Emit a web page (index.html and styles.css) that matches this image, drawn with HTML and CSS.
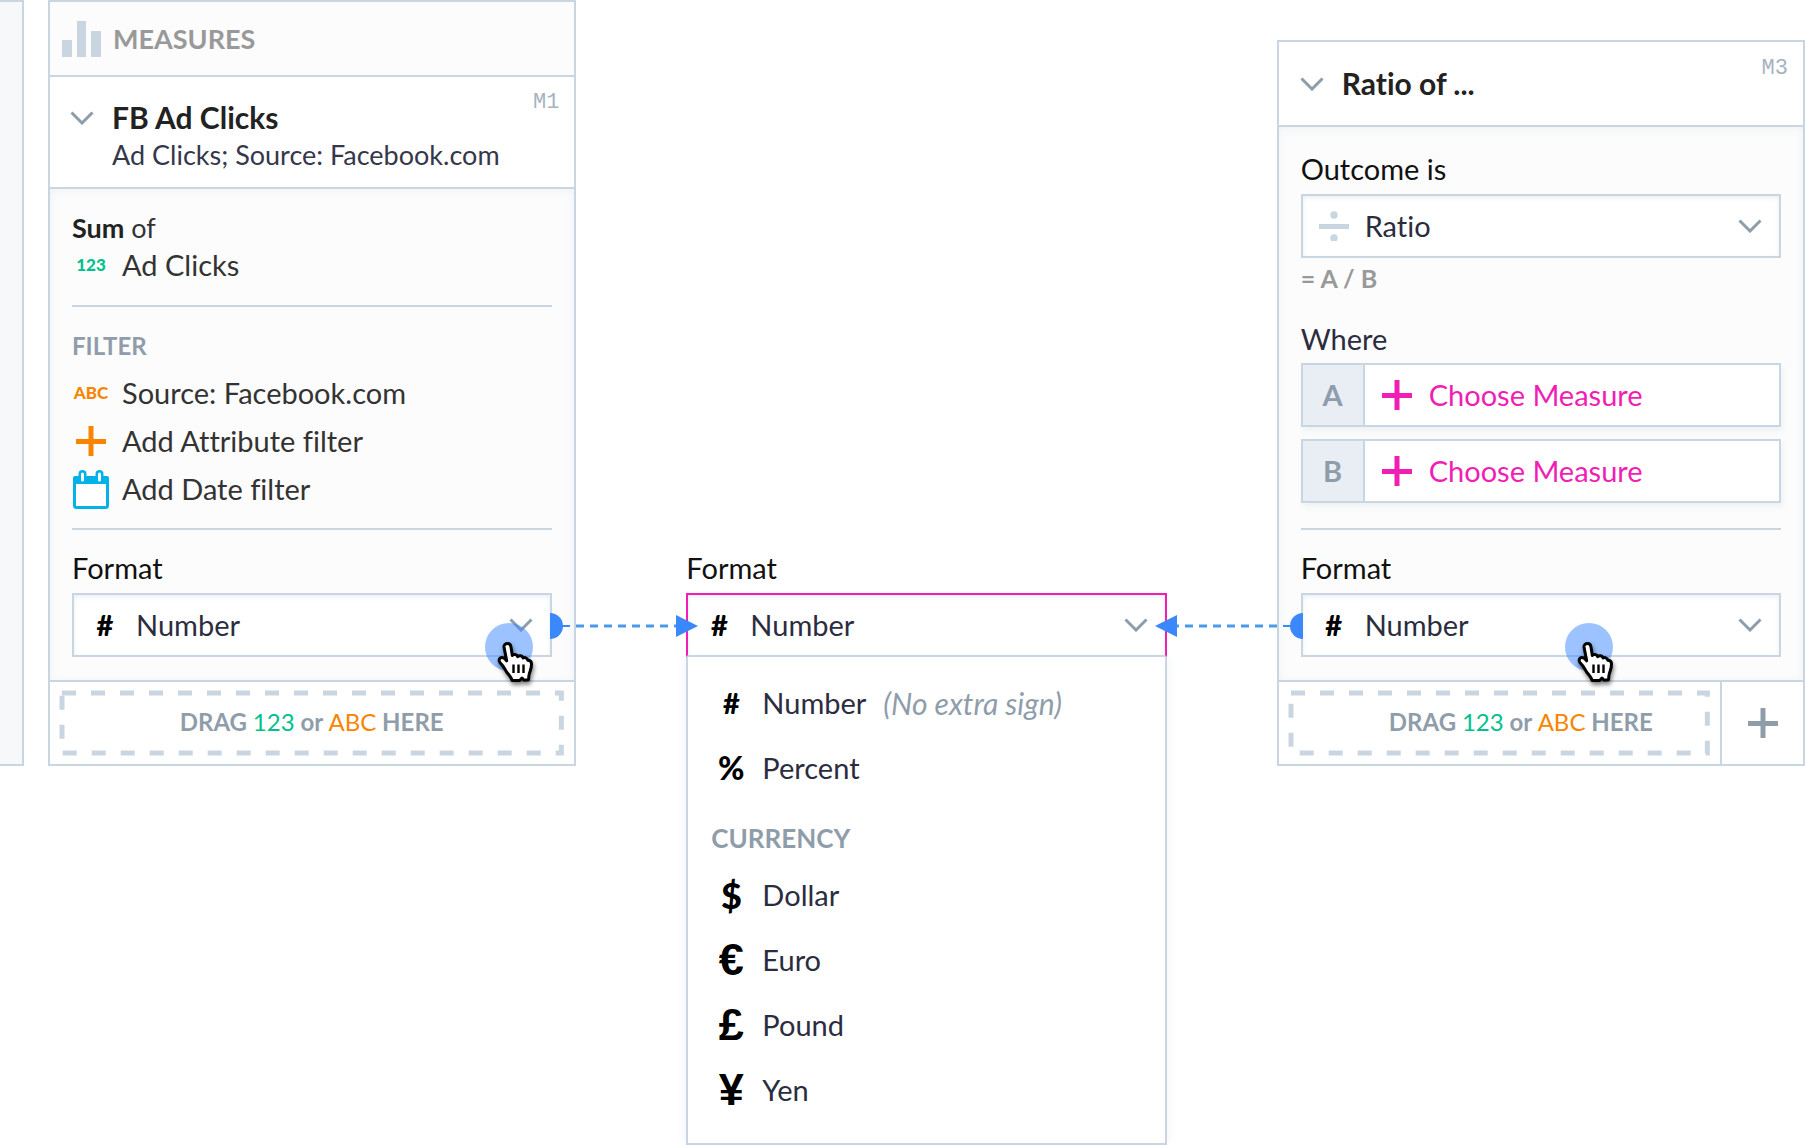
FILE: index.html
```
<!DOCTYPE html>
<html lang="en">
<head>
<meta charset="utf-8">
<title>Measure format</title>
<meta name="viewport" content="width=device-width, initial-scale=1">
<link rel="stylesheet" href="styles.css">
</head>
<body>
<svg class="defs" aria-hidden="true">
  <symbol id="chevron" viewBox="0 0 24 14"><path d="M1.5 1.5 12 12 22.500 1.500" fill="none" stroke="currentColor" stroke-width="3"/></symbol>
  <symbol id="plus" viewBox="0 0 30 30"><path d="M15 0V30M0 15.500H30" fill="none" stroke="currentColor" stroke-width="5"/></symbol>
  <symbol id="hand" viewBox="0 0 40 44">
    <path d="M12.500 2.500c2 0 3.300 1.500 3.500 3.500l1.300 8.500c1-1.600 4.600-1.500 5.300 1.200 1.500-1.500 4.700-1.200 5.500 1.300 1.500-1 4.300-.3 4.700 2.300 2 0 3.600 1.200 3.700 3.500.2 4.700-1.800 7.700-2.400 10.700-.5 2-.2 3.500-.6 5.200l-4.500.5-2-2.200-2.300 2.500h-7.500c-1-3.700-3.700-5.700-5.700-8.700-1.800-2.700-2.600-5.200-5.200-7.600-2.400-2.200-3-4.700-1-6.200 2-1.300 4.700.3 6.400 2.800L9 6c-.3-2 1.500-3.500 3.500-3.500z" fill="#fff" stroke="#000" stroke-width="3" stroke-linejoin="round"/>
    <path d="M18.500 23.500V32M23.500 23.500V32M28.500 23.500V32" stroke="#000" stroke-width="2.400"/>
  </symbol>
</svg>

<main class="board">
  <aside class="stub"></aside>

  <div class="columns">
    <section class="panel">
      <header class="panel-header">
        <svg class="bars" viewBox="0 0 39 36" aria-hidden="true"><path d="M0 19h10v17H0zM15 0h9v36h-9zM29 10h10v26H29z" fill="currentColor"/></svg>
        <h2 class="panel-title">MEASURES</h2>
      </header>
      <div class="measure-header">
        <button class="toggle" type="button" aria-label="Collapse FB Ad Clicks"><svg class="chevron"><use href="#chevron"/></svg></button>
        <div class="measure-text">
          <h3 class="measure-name">FB Ad Clicks</h3>
          <p class="measure-summary">Ad Clicks; Source: Facebook.com</p>
        </div>
        <span class="measure-id">M1</span>
      </div>
      <div class="panel-body">
        <p class="line"><b>Sum</b> of</p>
        <p class="row row-tight"><span class="tag tag-number">123</span>Ad Clicks</p>
        <hr class="rule">
        <h4 class="group-title">FILTER</h4>
        <div class="filters">
          <p class="row"><span class="tag tag-text">ABC</span>Source: Facebook.com</p>
          <button class="row" type="button"><span class="tag tag-text"><svg class="plus"><use href="#plus"/></svg></span>Add Attribute filter</button>
          <button class="row" type="button"><span class="tag tag-date"><svg class="calendar" viewBox="0 0 36 39" aria-hidden="true"><path d="M1.500 12V35.500a2 2 0 0 0 2 2h29a2 2 0 0 0 2-2V12" fill="#fff" stroke="currentColor" stroke-width="3"/><path d="M0 14V8a2 2 0 0 1 2-2h3.500V4a4 4 0 0 1 8 0v2h9V4a4 4 0 0 1 8 0v2H34a2 2 0 0 1 2 2v6z" fill="currentColor"/><path d="M9.500 4v6M26.500 4v6" stroke="#fff" stroke-width="3" stroke-linecap="round"/></svg></span>Add Date filter</button>
        </div>
        <hr class="rule rule-before-format">
        <label class="field-label" for="format-m1">Format</label>
        <div class="select-box">
          <span class="sign">#</span>
          <select class="select" id="format-m1"><option>Number</option></select>
          <svg class="chevron chevron-end"><use href="#chevron"/></svg>
          <svg class="link link-right" viewBox="0 0 148 26" aria-hidden="true"><path d="M0 0a13 13 0 0 1 0 26z" fill="#3b88fd"/><path d="M12 13h8" stroke="#3b88fd" stroke-width="2"/><path d="M26 13h100" stroke="#4a9aea" stroke-width="3" stroke-dasharray="8 6"/><path d="M126 2v22l22-11z" fill="#3b88fd"/></svg>
          <span class="tap tap-near"><svg class="hand"><use href="#hand"/></svg></span>
        </div>
      </div>
      <footer class="panel-footer">
        <div class="drop">
          <svg class="drop-frame" aria-hidden="true"><rect x="2" y="2" width="100%" height="100%"/></svg>
          <span class="drop-text">DRAG <span class="word-number">123</span> or <span class="word-text">ABC</span> HERE</span>
        </div>
      </footer>
    </section>

    <section class="picker">
      <label class="field-label" for="format-open">Format</label>
      <div class="select-box select-box-open">
        <span class="sign">#</span>
        <select class="select" id="format-open"><option>Number</option></select>
        <svg class="chevron chevron-end"><use href="#chevron"/></svg>
      </div>
      <div class="menu">
        <button class="option" type="button"><span class="sign">#</span>Number<i class="hint">(No extra sign)</i></button>
        <button class="option" type="button"><span class="sign sign-percent">%</span>Percent</button>
        <h4 class="menu-title">CURRENCY</h4>
        <button class="option" type="button"><span class="sign sign-dollar">$</span>Dollar</button>
        <button class="option" type="button"><span class="sign sign-currency">€</span>Euro</button>
        <button class="option" type="button"><span class="sign sign-currency">£</span>Pound</button>
        <button class="option" type="button"><span class="sign sign-currency">¥</span>Yen</button>
      </div>
    </section>

    <section class="panel panel-lower">
      <div class="measure-header measure-header-single">
        <button class="toggle" type="button" aria-label="Collapse ratio"><svg class="chevron"><use href="#chevron"/></svg></button>
        <div class="measure-text"><h3 class="measure-name">Ratio of ...</h3></div>
        <span class="measure-id">M3</span>
      </div>
      <div class="panel-body panel-body-ratio">
        <label class="field-label" for="outcome">Outcome is</label>
        <div class="select-box">
          <span class="sign sign-divide"><svg class="divide" viewBox="0 0 30 30" aria-hidden="true"><path d="M0 13h30v5H0z" fill="currentColor"/><circle cx="15" cy="4" r="3.700" fill="currentColor"/><circle cx="15" cy="27" r="3.700" fill="currentColor"/></svg></span>
          <select class="select" id="outcome"><option>Ratio</option></select>
          <svg class="chevron chevron-end"><use href="#chevron"/></svg>
        </div>
        <p class="formula">= A / B</p>
        <p class="where">Where</p>
        <div class="operands">
          <div class="operand"><span class="operand-key">A</span><button class="operand-pick" type="button"><svg class="plus"><use href="#plus"/></svg>Choose Measure</button></div>
          <div class="operand"><span class="operand-key">B</span><button class="operand-pick" type="button"><svg class="plus"><use href="#plus"/></svg>Choose Measure</button></div>
        </div>
        <hr class="rule rule-before-format">
        <label class="field-label" for="format-m3">Format</label>
        <div class="select-box">
          <span class="sign">#</span>
          <select class="select" id="format-m3"><option>Number</option></select>
          <svg class="chevron chevron-end"><use href="#chevron"/></svg>
          <svg class="link link-left" viewBox="0 0 148 26" aria-hidden="true"><path d="M148 0a13 13 0 0 0 0 26z" fill="#3b88fd"/><path d="M136 13h-8" stroke="#3b88fd" stroke-width="2"/><path d="M122 13H22" stroke="#4a9aea" stroke-width="3" stroke-dasharray="8 6"/><path d="M22 2v22L0 13z" fill="#3b88fd"/></svg>
          <span class="tap tap-far"><svg class="hand"><use href="#hand"/></svg></span>
        </div>
      </div>
      <footer class="panel-footer">
        <div class="drop drop-shifted">
          <svg class="drop-frame" aria-hidden="true"><rect x="2" y="2" width="100%" height="100%"/></svg>
          <span class="drop-text">DRAG <span class="word-number">123</span> or <span class="word-text">ABC</span> HERE</span>
        </div>
        <button class="add" type="button" aria-label="Add measure"><svg class="plus"><use href="#plus"/></svg></button>
      </footer>
    </section>
  </div>
</main>
</body>
</html>
```
FILE: styles.css
```
:root {
  --line: #c9d6e2;
  --muted: #8f9dab;
  --ink: #2b2d3f;
  --green: #00c18d;
  --orange: #f88500;
  --pink: #f01eb4;
}

* { box-sizing: border-box; }

body {
  margin: 0;
  background: #fff;
  color: #333;
  font-family: Lato, "Open Sans", sans-serif;
  font-size: 29px;
  font-variant-ligatures: none;
  line-height: 38px;
}

h2, h3, h4, p { margin: 0; }

button, select {
  margin: 0;
  padding: 0;
  border: 0;
  background: none;
  color: inherit;
  font: inherit;
  font-variant-ligatures: none;
  text-align: left;
}

.defs { position: absolute; width: 0; height: 0; }

.board { display: flex; align-items: flex-start; gap: 24px; }

.stub {
  flex: none;
  width: 24px;
  height: 766px;
  border: 2px solid var(--line);
  border-left: 0;
  background: #f6f8fa;
}

.columns {
  flex: 1;
  display: grid;
  grid-template-columns: 11fr 10fr 11fr;
  gap: 110px;
  align-items: start;
}

.panel { border: 2px solid var(--line); background: #fff; }
.panel-lower { margin-top: 40px; }

.panel-header {
  display: flex;
  align-items: center;
  gap: 12px;
  height: 75px;
  padding-left: 12px;
  border-bottom: 2px solid var(--line);
  background: #fcfcfc;
}
.bars { width: 39px; height: 36px; color: var(--line); }
.panel-title { color: #999; font-size: 27px; font-weight: 700; }

.measure-header {
  display: flex;
  align-items: flex-start;
  padding: 22px 15px 14px 20px;
  border-bottom: 2px solid var(--line);
  line-height: 37px;
}
.measure-header-single { padding: 23px 15px 23px 21px; }
.toggle { display: flex; align-items: center; width: 42px; height: 37px; color: var(--muted); }
.chevron { display: block; flex: none; width: 24px; height: 14px; }
.measure-text { flex: 1; }
.measure-name { color: #222; font-size: 30px; font-weight: 700; }
.measure-summary { color: #35374a; font-size: 27px; }
.measure-id {
  margin-top: -15px;
  color: #a7b3bf;
  font-family: "Liberation Mono", monospace;
  font-size: 22px;
}

.panel-body {
  padding: 20px 22px 23px;
  background: #fcfcfc;
  box-shadow: inset 0 2px 10px #eef2f6;
}
.panel-body-ratio { padding-top: 23px; }
.line { font-size: 27px; }
.line b { color: #222; }

.row { display: flex; align-items: center; gap: 12px; width: 100%; height: 48px; padding-bottom: 2px; }
.row-tight { height: 38px; }
.tag { display: flex; justify-content: center; width: 38px; font-size: 17px; font-weight: 900; }
.tag-number { color: var(--green); }
.tag-text { color: var(--orange); }
.tag-date { color: #00b2e8; }
.plus { display: block; flex: none; width: 30px; height: 30px; }
.calendar { width: 36px; height: 39px; }

.rule { margin: 20px 0; border: 0; border-top: 2px solid var(--line); }
.rule-before-format { margin: 14px 0 19px; }
.group-title { margin-bottom: 5px; color: var(--muted); font-size: 24px; font-weight: 700; }

.field-label { display: block; margin-bottom: 6px; color: #111; }

.select-box {
  position: relative;
  display: flex;
  align-items: center;
  height: 64px;
  padding-right: 17px;
  border: 2px solid var(--line);
  background: #fff;
  box-shadow: inset 0 2px 5px #eaf0f4;
}
.select { flex: 1; min-width: 0; height: 100%; appearance: none; outline: 0; color: var(--ink); }
.chevron-end { color: var(--muted); pointer-events: none; }
.sign { flex: none; display: flex; justify-content: center; width: 62px; color: #000; font-weight: 900; }
.sign-percent { font-size: 32px; }
.sign-dollar { font-size: 36px; }
.sign-currency { font-family: "Liberation Sans", Arial, sans-serif; font-size: 45px; font-weight: 700; }
.sign-divide { color: var(--line); }
.divide { width: 30px; height: 30px; }

.link { position: absolute; top: 18px; width: 148px; height: 26px; z-index: 2; }
.link-right { left: 100%; }
.link-left { right: 100%; }

.tap {
  position: absolute;
  top: 28px;
  width: 48px;
  height: 48px;
  border-radius: 50%;
  background: rgba(58, 136, 255, 0.5);
  pointer-events: none;
}
.tap-near { right: 17px; }
.tap-far { right: 166px; }
.hand {
  position: absolute;
  left: 10px;
  top: 18px;
  width: 40px;
  height: 44px;
  filter: drop-shadow(1px 3px 2px rgba(0, 0, 0, 0.5));
}

.panel-footer { display: flex; height: 84px; border-top: 2px solid var(--line); }
.drop {
  position: relative;
  flex: 1;
  display: flex;
  align-items: center;
  justify-content: center;
  margin: 9px 11px 9px 10px;
  padding-bottom: 2px;
  color: var(--muted);
  font-size: 24px;
  font-weight: 700;
}
.drop-shifted { padding-left: 44px; }
.drop-frame { position: absolute; inset: 0 4px 4px 0; width: calc(100% - 4px); height: calc(100% - 4px); overflow: visible; }
.drop-frame rect { fill: none; stroke: var(--line); stroke-width: 5; stroke-dasharray: 14 15; }
.word-number { color: var(--green); font-weight: 400; }
.word-text { color: var(--orange); font-weight: 400; }
.add {
  display: flex;
  align-items: center;
  justify-content: center;
  width: 83px;
  border-left: 2px solid var(--line);
  color: var(--muted);
}

.picker { padding-top: 549px; }
.select-box-open { border-color: var(--pink); border-bottom-color: var(--line); }
.menu {
  padding: 14px 0 20px;
  border: 2px solid var(--line);
  border-top: 0;
  box-shadow: 0 0 12px #eef2f5;
}
.option { display: flex; align-items: center; width: 100%; height: 65px; padding: 0 0 2px 12px; color: var(--ink); }
.hint { margin-left: 17px; color: var(--muted); font-size: 30px; }
.menu-title { padding: 12px 0 0 23px; color: var(--muted); font-size: 26px; font-weight: 700; line-height: 50px; }

.formula { margin-top: 1px; color: #999; font-size: 25px; font-weight: 700; }
.where { margin: 23px 0 5px; color: var(--ink); }
.operands { display: grid; gap: 12px; margin-bottom: 25px; }
.operand { display: flex; height: 64px; border: 2px solid var(--line); background: #fff; box-shadow: 2px 4px 6px #eef1f5; }
.operand-key {
  display: flex;
  align-items: center;
  justify-content: center;
  width: 62px;
  border-right: 2px solid var(--line);
  background: #e9eef4;
  color: var(--muted);
  font-weight: 700;
}
.operand-pick { flex: 1; display: flex; align-items: center; gap: 17px; padding-left: 17px; color: var(--pink); }
```
